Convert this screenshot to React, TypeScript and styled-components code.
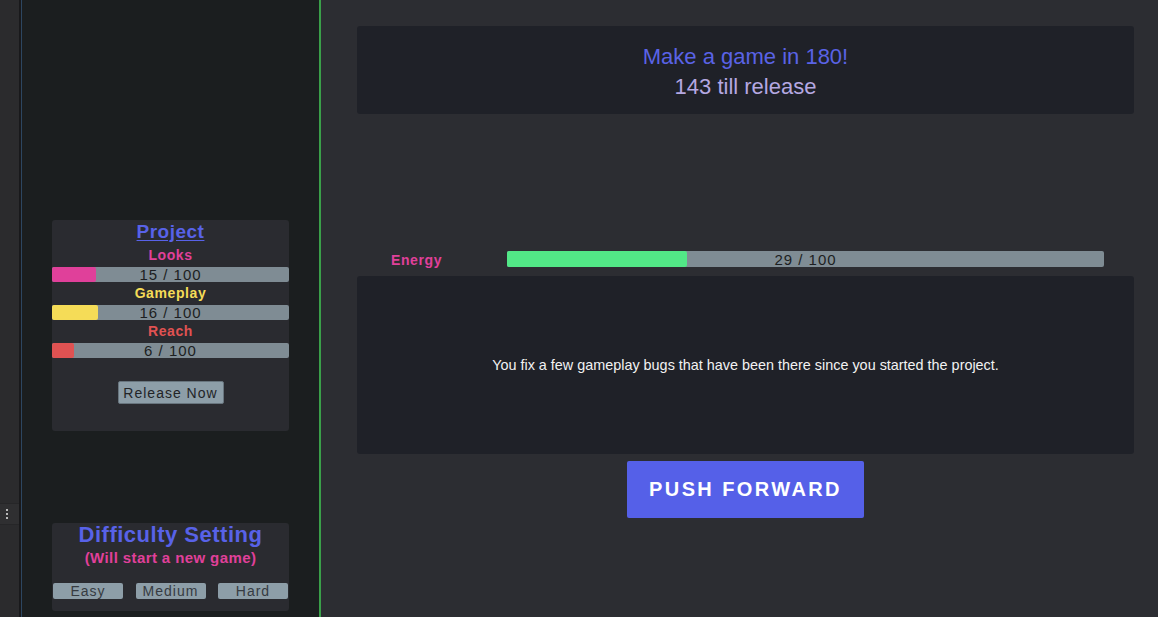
import React from "react";
import styled, { createGlobalStyle } from "styled-components";

const Global = createGlobalStyle`
  html, body { margin: 0; padding: 0; background: #2c2d32; overflow: hidden; }
  body { font-family: "Liberation Sans", Arial, sans-serif; }
`;

const Page = styled.div`
  display: flex;
  width: 1158px;
  height: 617px;
`;

const Strip = styled.div`
  width: 21px;
  flex: none;
  background: #2b2b2d;
  border-right: 2px solid #19191b;
  display: flex;
  flex-direction: column;
  padding-top: 503px;
  box-sizing: border-box;
`;

const Handle = styled.div`
  height: 20px;
  background: #2f2f31;
  border-top: 1px solid #262628;
  border-bottom: 1px solid #262628;
  display: flex;
  flex-direction: column;
  align-items: flex-start;
  justify-content: center;
  gap: 2px;
  padding-left: 6px;
`;

const Dot = styled.span`
  width: 2px;
  height: 2px;
  background: #b8b8b8;
`;

const Sidebar = styled.div`
  width: 300px;
  flex: none;
  background: #1b1e1f;
  border-left: 1px solid #2d4660;
  border-right: 2px solid #3a9f49;
  box-sizing: border-box;
  display: flex;
  flex-direction: column;
  align-items: flex-start;
  padding: 220px 0 0 30px;
  gap: 92px;
`;

const Panel = styled.div`
  width: 237px;
  background: #2a2b30;
  border-radius: 3px;
  display: flex;
  flex-direction: column;
  align-items: center;
  box-sizing: border-box;
`;

const ProjectPanel = styled(Panel)`
  height: 211px;
`;

const DifficultyPanel = styled(Panel)`
  height: 88px;
`;

const PanelTitle = styled.div<{ $size: number; $underline?: boolean }>`
  color: #5862e8;
  font-weight: bold;
  font-size: ${(p) => p.$size}px;
  line-height: 24px;
  letter-spacing: 0.5px;
  text-decoration: ${(p) => (p.$underline ? "underline" : "none")};
  text-underline-offset: 2px;
`;

const Label = styled.div<{ $color: string }>`
  color: ${(p) => p.$color};
  font-weight: bold;
  font-size: 14px;
  line-height: 22px;
  letter-spacing: 0.6px;
`;

const Bar = styled.div<{ $h: number }>`
  position: relative;
  width: 100%;
  height: ${(p) => p.$h}px;
  margin-top: 1px;
  background: #7f8c94;
  border-radius: 2px;
  display: flex;
  align-items: center;
  justify-content: center;
  flex: none;
`;

const Fill = styled.div<{ $color: string }>`
  position: absolute;
  left: 0;
  top: 0;
  bottom: 0;
  background: ${(p) => p.$color};
  border-radius: 2px;
`;

const BarText = styled.span`
  position: relative;
  color: #1d1f22;
  font-size: 15px;
  letter-spacing: 1px;
`;

const ReleaseButton = styled.button`
  margin-top: 23px;
  width: 106px;
  height: 23px;
  background: #8d9ea8;
  border: 1px solid #68757e;
  border-radius: 2px;
  color: #222427;
  font-family: "Liberation Sans", Arial, sans-serif;
  font-size: 14px;
  letter-spacing: 1px;
  padding: 0;
`;

const SubTitle = styled.div`
  color: #e0409a;
  font-weight: bold;
  font-size: 15px;
  line-height: 20px;
  letter-spacing: 0.4px;
  margin-top: 1px;
`;

const DiffRow = styled.div`
  margin-top: 15px;
  width: 100%;
  box-sizing: border-box;
  padding: 0 1px;
  display: flex;
  justify-content: space-between;
`;

const DiffButton = styled.button`
  width: 70px;
  height: 16px;
  padding: 0;
  border: none;
  border-radius: 2px;
  background: #8d9ea8;
  color: #363b41;
  font-family: "Liberation Sans", Arial, sans-serif;
  font-size: 14px;
  line-height: 16px;
  letter-spacing: 1px;
`;

const Main = styled.div`
  flex: 1;
  background: #2c2d32;
  display: flex;
  flex-direction: column;
  padding: 26px 24px 0 36px;
  box-sizing: border-box;
`;

const Card = styled.div<{ $h: number }>`
  height: ${(p) => p.$h}px;
  background: #1f2128;
  border-radius: 3px;
  display: flex;
  flex-direction: column;
  align-items: center;
  justify-content: center;
  flex: none;
  box-sizing: border-box;
`;

const HeaderCard = styled(Card)`
  padding-top: 4px;
`;

const HeadLine = styled.div<{ $color: string }>`
  color: ${(p) => p.$color};
  font-size: 22px;
  line-height: 30px;
`;

const EnergyRow = styled.div`
  margin-top: 137px;
  height: 16px;
  display: flex;
  align-items: center;
  padding-right: 30px;
`;

const EnergyLabel = styled.div`
  width: 150px;
  flex: none;
  box-sizing: border-box;
  padding-left: 34px;
  color: #e0409a;
  font-weight: bold;
  font-size: 14px;
  letter-spacing: 0.6px;
  line-height: 16px;
  margin-top: 2px;
`;

const EnergyBar = styled(Bar)`
  margin-top: 0;
  flex: 1;
  width: auto;
`;

const MessageCard = styled(Card)`
  margin-top: 9px;
`;

const Message = styled.div`
  color: #f2f2f2;
  font-size: 14.4px;
`;

const PushButton = styled.button`
  align-self: center;
  margin-top: 7px;
  width: 237px;
  height: 57px;
  background: #5560e8;
  border: none;
  border-radius: 2px;
  color: #ffffff;
  font-family: "Liberation Sans", Arial, sans-serif;
  font-weight: bold;
  font-size: 20px;
  letter-spacing: 2.4px;
  padding: 0;
`;

const stats = [
  { name: "Looks", color: "#e0409a", value: 15 },
  { name: "Gameplay", color: "#f5dc57", value: 16 },
  { name: "Reach", color: "#e05252", value: 6 },
];

export default function App() {
  return (
    <Page>
      <Global />
      <Strip>
        <Handle>
          <Dot />
          <Dot />
          <Dot />
        </Handle>
      </Strip>
      <Sidebar>
        <ProjectPanel>
          <PanelTitle $size={19} $underline>
            Project
          </PanelTitle>
          {stats.map((s) => (
            <React.Fragment key={s.name}>
              <Label $color={s.color}>{s.name}</Label>
              <Bar $h={15}>
                <Fill $color={s.color} style={{ width: `calc(${s.value}% + 8px)` }} />
                <BarText>{s.value} / 100</BarText>
              </Bar>
            </React.Fragment>
          ))}
          <ReleaseButton>Release Now</ReleaseButton>
        </ProjectPanel>
        <DifficultyPanel>
          <PanelTitle $size={22}>Difficulty Setting</PanelTitle>
          <SubTitle>(Will start a new game)</SubTitle>
          <DiffRow>
            <DiffButton>Easy</DiffButton>
            <DiffButton>Medium</DiffButton>
            <DiffButton>Hard</DiffButton>
          </DiffRow>
        </DifficultyPanel>
      </Sidebar>
      <Main>
        <HeaderCard $h={88}>
          <HeadLine $color="#5a63e6">Make a game in 180!</HeadLine>
          <HeadLine $color="#b5a8e2">143 till release</HeadLine>
        </HeaderCard>
        <EnergyRow>
          <EnergyLabel>Energy</EnergyLabel>
          <EnergyBar $h={16}>
            <Fill $color="#52e887" style={{ width: `calc(29% + 7px)` }} />
            <BarText>29 / 100</BarText>
          </EnergyBar>
        </EnergyRow>
        <MessageCard $h={178}>
          <Message>
            You fix a few gameplay bugs that have been there since you started the project.
          </Message>
        </MessageCard>
        <PushButton>PUSH FORWARD</PushButton>
      </Main>
    </Page>
  );
}
